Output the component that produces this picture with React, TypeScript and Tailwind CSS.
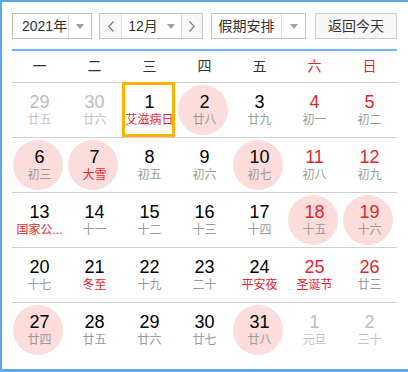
import React from 'react'

type Day = {
  n: number
  lunar: string
  other?: boolean
  redNum?: boolean
  redLunar?: boolean
  circle?: boolean
  today?: boolean
}

const weekdays = ['一', '二', '三', '四', '五', '六', '日']

const rows: Day[][] = [
  [
    { n: 29, lunar: '廿五', other: true },
    { n: 30, lunar: '廿六', other: true },
    { n: 1, lunar: '艾滋病日', redLunar: true, today: true },
    { n: 2, lunar: '廿八', circle: true },
    { n: 3, lunar: '廿九' },
    { n: 4, lunar: '初一', redNum: true },
    { n: 5, lunar: '初二', redNum: true },
  ],
  [
    { n: 6, lunar: '初三', circle: true },
    { n: 7, lunar: '大雪', redLunar: true, circle: true },
    { n: 8, lunar: '初五' },
    { n: 9, lunar: '初六' },
    { n: 10, lunar: '初七', circle: true },
    { n: 11, lunar: '初八', redNum: true },
    { n: 12, lunar: '初九', redNum: true },
  ],
  [
    { n: 13, lunar: '国家公...', redLunar: true },
    { n: 14, lunar: '十一' },
    { n: 15, lunar: '十二' },
    { n: 16, lunar: '十三' },
    { n: 17, lunar: '十四' },
    { n: 18, lunar: '十五', redNum: true, circle: true },
    { n: 19, lunar: '十六', redNum: true, circle: true },
  ],
  [
    { n: 20, lunar: '十七' },
    { n: 21, lunar: '冬至', redLunar: true },
    { n: 22, lunar: '十九' },
    { n: 23, lunar: '二十' },
    { n: 24, lunar: '平安夜', redLunar: true },
    { n: 25, lunar: '圣诞节', redNum: true, redLunar: true },
    { n: 26, lunar: '廿三', redNum: true },
  ],
  [
    { n: 27, lunar: '廿四', circle: true },
    { n: 28, lunar: '廿五' },
    { n: 29, lunar: '廿六' },
    { n: 30, lunar: '廿七' },
    { n: 31, lunar: '廿八', circle: true },
    { n: 1, lunar: '元旦', other: true },
    { n: 2, lunar: '三十', other: true },
  ],
]

function Caret() {
  return (
    <svg width="8" height="5" viewBox="0 0 8 5" className="block">
      <path d="M0 0h8L4 5z" fill="#a0a0a0" />
    </svg>
  )
}

function Chevron({ dir }: { dir: 'l' | 'r' }) {
  return (
    <svg width="6" height="11" viewBox="0 0 6 11" className="block">
      <path
        d={dir === 'l' ? 'M5.5 0.5L0.8 5.5l4.7 5' : 'M0.5 0.5l4.7 5-4.7 5'}
        fill="none"
        stroke="#777"
        strokeWidth="1.1"
      />
    </svg>
  )
}

function Cell({ d }: { d: Day }) {
  let numColor = 'text-black'
  if (d.other) numColor = 'text-[#bdbdbd]'
  else if (d.redNum) numColor = 'text-[#e3262d]'
  let lunarColor = 'text-[#9a9a9a]'
  if (d.other) lunarColor = 'text-[#c4c4c4]'
  else if (d.redLunar) lunarColor = 'text-[#e3262d]'

  return (
    <div className="relative flex h-[54px] items-center justify-center">
      {d.circle && <div className="absolute left-[1px] top-[2px] h-[50px] w-[50px] rounded-full bg-[#fddcdc]" />}
      {d.today && <div className="absolute left-0 top-[-1px] h-[55px] w-[53px] border-[3px] border-[#ffb300]" />}
      <div className="relative flex flex-col items-center">
        <span className={`text-[18px] leading-[20px] ${numColor}`}>{d.n}</span>
        <span className={`whitespace-nowrap text-[12px] leading-[16px] ${lunarColor}`}>{d.lunar}</span>
      </div>
    </div>
  )
}

export default function App() {
  return (
    <div
      className="h-[372px] w-[408px] overflow-hidden border-b-[3px] border-l-2 border-t-2 border-[#5ea8f0] bg-white pl-[10px] pt-[11px]"
      style={{ fontFamily: '"Liberation Sans", "Noto Sans CJK SC", sans-serif' }}
    >
      <div className="flex h-[26px] items-stretch text-[14px] text-[#333]">
        <div className="flex w-[80px] border border-[#c3c3c3] bg-white">
          <div className="flex flex-1 items-center pl-[9px]">2021年</div>
          <div className="flex w-[23px] items-center justify-center border-l border-[#dcdcdc]">
            <Caret />
          </div>
        </div>
        <div className="ml-[7px] flex w-[104px] border border-[#c3c3c3] bg-white">
          <div className="flex w-[22px] items-center justify-center border-r border-[#dcdcdc] bg-[#f7f7f7]">
            <Chevron dir="l" />
          </div>
          <div className="flex flex-1 items-center justify-center gap-[9px]">
            <span>12月</span>
            <Caret />
          </div>
          <div className="flex w-[21px] items-center justify-center border-l border-[#dcdcdc] bg-[#f7f7f7]">
            <Chevron dir="r" />
          </div>
        </div>
        <div className="ml-[8px] flex w-[95px] border border-[#c3c3c3] bg-white">
          <div className="flex flex-1 items-center justify-center">假期安排</div>
          <div className="flex w-[24px] items-center justify-center border-l border-[#dcdcdc]">
            <Caret />
          </div>
        </div>
        <div className="ml-[9px] flex w-[82px] items-center justify-center border border-[#cfcfcf] bg-[#f7f7f7]">
          返回今天
        </div>
      </div>

      <div className="mt-[10px] h-[2px] w-[385px] bg-[#6eb2f2]" />

      <div className="w-[385px]">
        <div className="grid h-[32px] grid-cols-7 border-b border-[#cfcfcf] text-[14px]">
          {weekdays.map((w, i) => (
            <div
              key={w}
              className={`flex items-center justify-center ${i >= 5 ? 'text-[#e3262d]' : 'text-[#333]'}`}
            >
              {w}
            </div>
          ))}
        </div>
        {rows.map((r, ri) => (
          <div
            key={ri}
            className={`grid grid-cols-7 ${ri < rows.length - 1 ? 'border-b border-[#cfcfcf]' : ''}`}
          >
            {r.map((d, di) => (
              <Cell key={di} d={d} />
            ))}
          </div>
        ))}
      </div>
    </div>
  )
}
